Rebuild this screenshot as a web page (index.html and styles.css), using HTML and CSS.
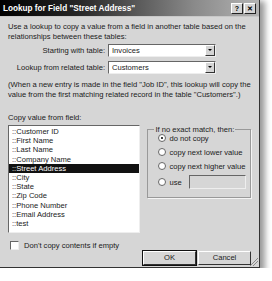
FILE: index.html
```html
<!DOCTYPE html>
<html>
<head>
<meta charset="utf-8">
<title>Lookup for Field</title>
<link rel="stylesheet" href="styles.css">
</head>
<body>
<div class="shadow">
	<div class="window">
		<div class="titlebar">
			<span class="title">Lookup for Field "Street Address"</span>
			<span class="tbtns"><span class="tbtn">?</span><span class="tbtn">&#x2715;</span></span>
		</div>
		<div class="content">
			<p class="intro">Use a lookup to copy a value from a field in another table based on the relationships between these tables:</p>
			<div class="row">
				<label>Starting with table:</label>
				<div class="combo"><span>Invoices</span><i class="arrow"></i></div>
			</div>
			<div class="row">
				<label>Lookup from related table:</label>
				<div class="combo"><span>Customers</span><i class="arrow"></i></div>
			</div>
			<p class="note">(When a new entry is made in the field "Job ID", this lookup will copy the value from the first matching related record in the table "Customers".)</p>
			<div class="fields">
				<div class="left">
					<div class="caption">Copy value from field:</div>
					<ul class="list">
						<li>::Customer ID</li>
						<li>::First Name</li>
						<li>::Last Name</li>
						<li>::Company Name</li>
						<li class="sel">::Street Address</li>
						<li>::City</li>
						<li>::State</li>
						<li>::Zip Code</li>
						<li>::Phone Number</li>
						<li>::Email Address</li>
						<li>::test</li>
					</ul>
				</div>
				<fieldset class="group">
					<legend>If no exact match, then:</legend>
					<div class="radios">
						<div class="radio"><i class="dot on"></i>do not copy</div>
						<div class="radio"><i class="dot"></i>copy next lower value</div>
						<div class="radio"><i class="dot"></i>copy next higher value</div>
						<div class="radio use"><i class="dot"></i>use <span class="field"></span></div>
					</div>
				</fieldset>
			</div>
			<div class="check"><i class="box"></i>Don't copy contents if empty</div>
			<div class="buttons">
				<span class="btn def">OK</span>
				<span class="btn">Cancel</span>
			</div>
			<i class="grip"></i>
		</div>
	</div>
</div>
</body>
</html>
```
FILE: styles.css
```css
body {
	margin: 0;
	background-color: #fff;
	font-family: 'Liberation Sans', Arial, sans-serif;
	font-size: 7.6px;
	color: #1a1a1a;
}
.shadow {
	width: 260px;
	height: 268px;
	box-shadow: 3px 3px 6px 2px #9a9a9a;
}
.window {
	width: 259px;
	height: 267px;
	background-color: #d6d6d6;
	border-right: 1px solid #333;
	border-bottom: 1px solid #333;
	display: flex;
	flex-direction: column;
}
.titlebar {
	height: 16px;
	background: linear-gradient(to right, #000 0%, #262626 30%, #8a8a8a 75%, #b4b4b4 100%);
	display: flex;
	align-items: center;
	justify-content: space-between;
	padding: 0 3px 0 3px;
	border-bottom: 1px solid #c8c8c8;
}
.title {
	color: #fff;
	font-weight: bold;
	font-size: 8.2px;
}
.tbtns {
	display: flex;
	gap: 1px;
}
.tbtn {
	width: 10px;
	height: 9px;
	background-color: #d4d4d4;
	border: 1px solid;
	border-color: #fff #222 #222 #fff;
	font-size: 7px;
	font-weight: bold;
	line-height: 9px;
	text-align: center;
	color: #000;
}
.content {
	flex: 1;
	padding: 5px 8px 0 8px;
	position: relative;
	display: flex;
	flex-direction: column;
}
p {
	margin: 0;
	line-height: 10px;
}
.row {
	display: flex;
	align-items: center;
	margin-top: 2px;
}
.row + .row {
	margin-top: 4px;
}
.row label {
	width: 97px;
	text-align: right;
	padding-right: 3px;
}
.combo {
	width: 103px;
	height: 11px;
	background-color: #fff;
	border: 1px solid;
	border-color: #666 #eee #eee #666;
	display: flex;
	align-items: center;
	justify-content: space-between;
	padding-left: 3px;
}
.arrow {
	width: 8px;
	height: 9px;
	background-color: #d4d4d4;
	border: 1px solid;
	border-color: #fff #333 #333 #fff;
	position: relative;
}
.arrow:after {
	content: "";
	position: absolute;
	left: 2px;
	top: 3px;
	border-left: 2px solid transparent;
	border-right: 2px solid transparent;
	border-top: 2px solid #000;
}
.note {
	margin-top: 6px;
}
.fields {
	display: flex;
	gap: 7px;
	margin-top: 13px;
}
.left {
	width: 133px;
}
.caption {
	line-height: 10px;
}
.list {
	list-style: none;
	margin: 2px 0 0 0;
	padding: 1px 0 2px 0;
	background-color: #fff;
	border: 1px solid;
	border-color: #666 #eee #eee #666;
	height: 103px;
}
.list li {
	height: 9.2px;
	line-height: 9.2px;
	padding-left: 3px;
}
.list li.sel {
	background-color: #111;
	color: #fff;
}
.group {
	margin: 12px 0 0 0;
	padding: 0 0 9px 10px;
	width: 92px;
	height: 62px;
	border: 1px solid #999;
	box-shadow: 1px 1px 0 #f4f4f4;
}
.group legend {
	padding: 0 1px;
	margin-left: -4px;
	line-height: 9px;
}
.radios {
	margin-top: -3px;
}
.radio {
	display: flex;
	align-items: center;
	height: 14px;
}
.dot {
	width: 6px;
	height: 6px;
	border-radius: 50%;
	background-color: #fff;
	border: 1px solid #666;
	margin-right: 3px;
	position: relative;
}
.dot.on:after {
	content: "";
	position: absolute;
	left: 2px;
	top: 2px;
	width: 2px;
	height: 2px;
	border-radius: 50%;
	background-color: #000;
}
.radio.use {
	height: 18px;
}
.field {
	width: 55px;
	height: 12px;
	margin-left: 7px;
	background-color: #d6d6d6;
	border: 1px solid;
	border-color: #666 #eee #eee #666;
}
.check {
	display: flex;
	align-items: center;
	height: 10px;
	margin-top: 7px;
	padding-left: 2px;
}
.box {
	width: 7px;
	height: 7px;
	background-color: #fff;
	border: 1px solid;
	border-color: #666 #eee #eee #666;
	margin-right: 5px;
}
.buttons {
	display: flex;
	justify-content: flex-end;
	gap: 2px;
	margin-top: 1px;
}
.btn {
	width: 51px;
	height: 12px;
	line-height: 12px;
	text-align: center;
	background-color: #d6d6d6;
	border: 1px solid;
	border-color: #fff #333 #333 #fff;
}
.btn.def {
	outline: 1px solid #111;
}
.grip {
	position: absolute;
	right: 1px;
	bottom: 1px;
	width: 8px;
	height: 8px;
	background: linear-gradient(135deg, transparent 45%, #888 45%, #888 52%, transparent 52%, transparent 65%, #888 65%, #888 72%, transparent 72%);
}
```
